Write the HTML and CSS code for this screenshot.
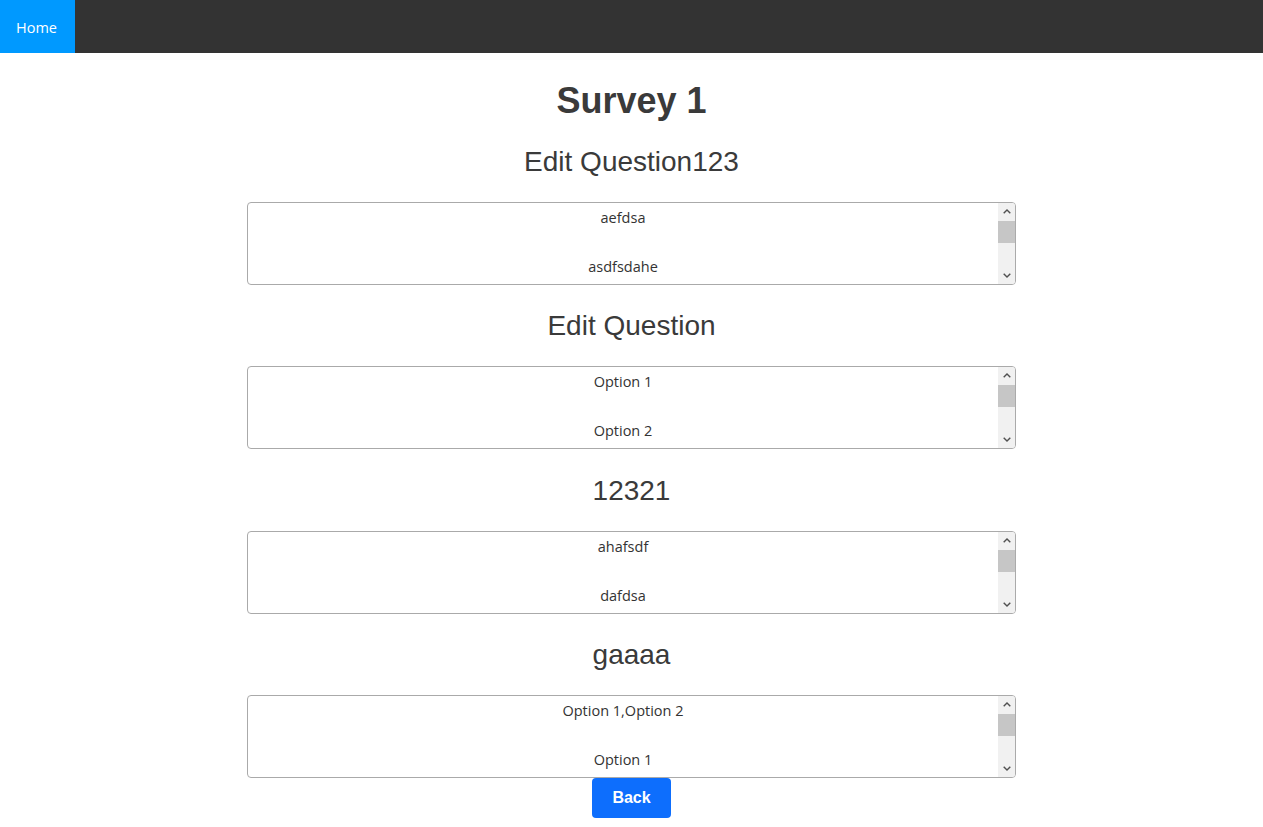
FILE: index.html
```html
<!DOCTYPE html>
<html>
<head>
<meta charset="utf-8">
<title>Survey 1</title>
<link rel="stylesheet" href="styles.css">
</head>
<body>
<nav class="topnav">
  <a class="nav-link active" href="#">Home</a>
</nav>
<main class="survey">
  <h1 class="survey-title">Survey 1</h1>

  <h2 class="question">Edit Question123</h2>
  <div class="answers">
    <div class="answer-list">
      <div class="answer">aefdsa</div>
      <div class="answer">asdfsdahe</div>
    </div>
    <div class="scrollbar">
      <span class="sb-btn"><svg viewBox="0 0 8 5" width="8" height="5"><path d="M0.7 4.3 L4 1 L7.3 4.3" fill="none" stroke="#505050" stroke-width="1.4"/></svg></span>
      <span class="sb-thumb"></span>
      <span class="sb-track"></span>
      <span class="sb-btn"><svg viewBox="0 0 8 5" width="8" height="5"><path d="M0.7 0.7 L4 4 L7.3 0.7" fill="none" stroke="#505050" stroke-width="1.4"/></svg></span>
    </div>
  </div>

  <h2 class="question">Edit Question</h2>
  <div class="answers">
    <div class="answer-list">
      <div class="answer">Option 1</div>
      <div class="answer">Option 2</div>
    </div>
    <div class="scrollbar">
      <span class="sb-btn"><svg viewBox="0 0 8 5" width="8" height="5"><path d="M0.7 4.3 L4 1 L7.3 4.3" fill="none" stroke="#505050" stroke-width="1.4"/></svg></span>
      <span class="sb-thumb"></span>
      <span class="sb-track"></span>
      <span class="sb-btn"><svg viewBox="0 0 8 5" width="8" height="5"><path d="M0.7 0.7 L4 4 L7.3 0.7" fill="none" stroke="#505050" stroke-width="1.4"/></svg></span>
    </div>
  </div>

  <h2 class="question">12321</h2>
  <div class="answers">
    <div class="answer-list">
      <div class="answer">ahafsdf</div>
      <div class="answer">dafdsa</div>
    </div>
    <div class="scrollbar">
      <span class="sb-btn"><svg viewBox="0 0 8 5" width="8" height="5"><path d="M0.7 4.3 L4 1 L7.3 4.3" fill="none" stroke="#505050" stroke-width="1.4"/></svg></span>
      <span class="sb-thumb"></span>
      <span class="sb-track"></span>
      <span class="sb-btn"><svg viewBox="0 0 8 5" width="8" height="5"><path d="M0.7 0.7 L4 4 L7.3 0.7" fill="none" stroke="#505050" stroke-width="1.4"/></svg></span>
    </div>
  </div>

  <h2 class="question">gaaaa</h2>
  <div class="answers">
    <div class="answer-list">
      <div class="answer">Option 1,Option 2</div>
      <div class="answer">Option 1</div>
    </div>
    <div class="scrollbar">
      <span class="sb-btn"><svg viewBox="0 0 8 5" width="8" height="5"><path d="M0.7 4.3 L4 1 L7.3 4.3" fill="none" stroke="#505050" stroke-width="1.4"/></svg></span>
      <span class="sb-thumb"></span>
      <span class="sb-track"></span>
      <span class="sb-btn"><svg viewBox="0 0 8 5" width="8" height="5"><path d="M0.7 0.7 L4 4 L7.3 0.7" fill="none" stroke="#505050" stroke-width="1.4"/></svg></span>
    </div>
  </div>

  <button class="back-btn">Back</button>
</main>
</body>
</html>
```

FILE: styles.css
```css
html, body {
  margin: 0;
  padding: 0;
  background: #fff;
}

body {
  font-family: "Liberation Sans", Arial, sans-serif;
  color: #333;
}

.topnav {
  display: flex;
  height: 53px;
  background: #333;
}

.nav-link {
  display: flex;
  align-items: center;
  padding: 2px 16px 0;
  width: 43px;
  font-family: "Open Sans", "Noto Sans", sans-serif;
  font-size: 14.5px;
  color: #fff;
  text-decoration: none;
}

.nav-link.active {
  background: #0099ff;
}

.survey {
  display: flex;
  flex-direction: column;
  align-items: center;
}

.survey-title {
  margin: 27px 0 0;
  font-size: 36px;
  line-height: 41px;
  font-weight: bold;
  color: #3a3a3a;
}

.question {
  margin: 25px 0 24px;
  font-size: 28px;
  line-height: 32px;
  font-weight: normal;
  color: #3a3a3a;
}

.answers {
  box-sizing: border-box;
  display: flex;
  width: 769px;
  height: 83px;
  border: 1px solid #aaa;
  border-radius: 4px;
  overflow: hidden;
  font-family: "Open Sans", "Noto Sans", sans-serif;
  font-size: 14.5px;
  color: #333;
}

.answers + .question {
  margin-top: 25.34px;
}

.answer-list {
  flex: 1;
  display: flex;
  flex-direction: column;
}

.answer {
  flex-shrink: 0;
  height: 49px;
  box-sizing: border-box;
  padding-top: 5px;
  line-height: 20px;
  text-align: center;
}

.scrollbar {
  width: 17px;
  display: flex;
  flex-direction: column;
  background: #f1f1f1;
}

.sb-btn {
  height: 17px;
  display: flex;
  align-items: center;
  justify-content: center;
}

.sb-thumb {
  height: 22px;
  margin: 1px 0 0;
  background: #c6c6c6;
}

.sb-track {
  flex: 1;
}

.back-btn {
  width: 79px;
  height: 40px;
  border: none;
  border-radius: 4px;
  background: #0d6efd;
  color: #fff;
  font-family: "Liberation Sans", Arial, sans-serif;
  font-size: 16px;
  font-weight: bold;
  cursor: pointer;
}
```
